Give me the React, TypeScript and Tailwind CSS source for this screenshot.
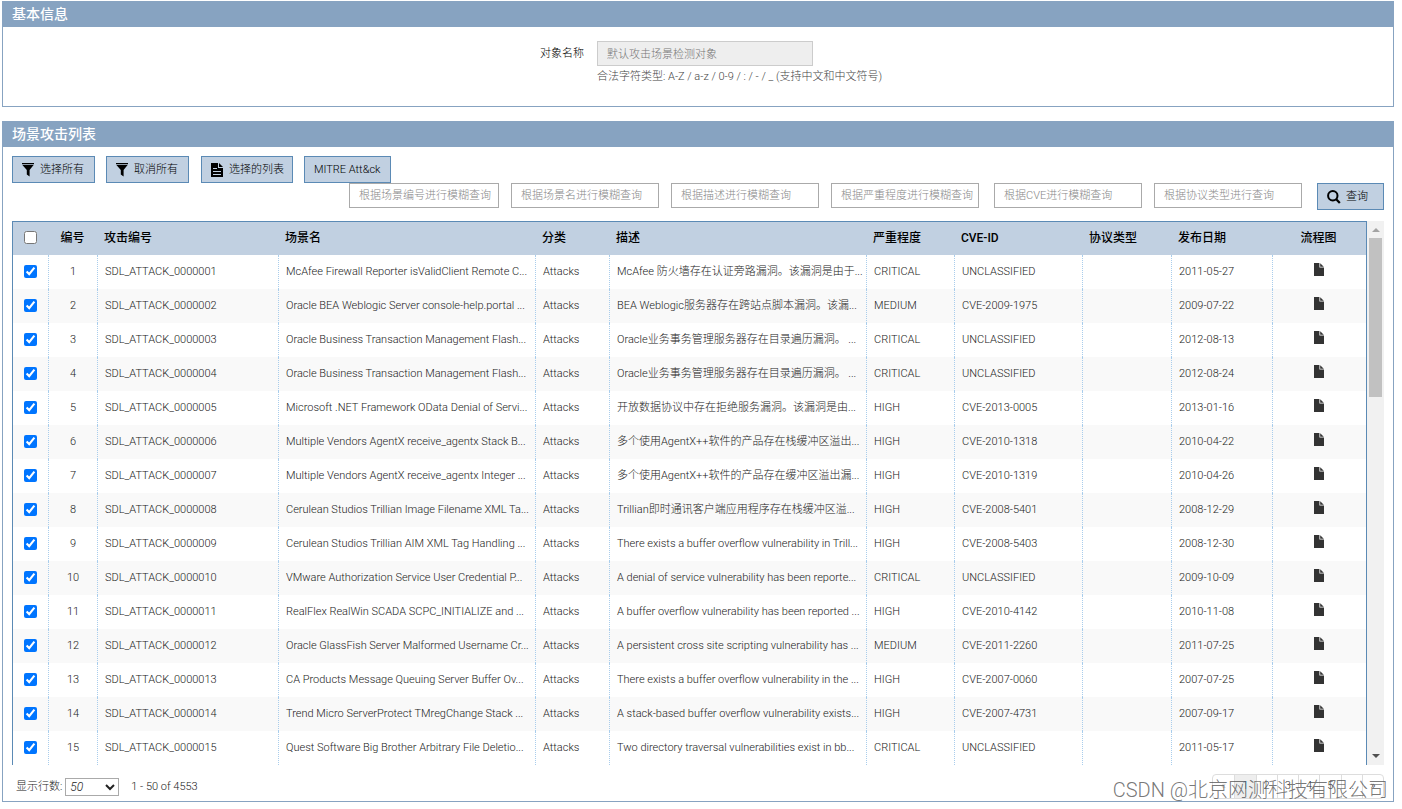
import React from "react";

type Row = { name: string; desc: string; level: string; cve: string; date: string };

const U = "UNCLASSIFIED";
const rows: Row[] = [
  { name: "McAfee Firewall Reporter isValidClient Remote C...", desc: "McAfee 防火墙存在认证旁路漏洞。该漏洞是由于...", level: "CRITICAL", cve: U, date: "2011-05-27" },
  { name: "Oracle BEA Weblogic Server console-help.portal ...", desc: "BEA Weblogic服务器存在跨站点脚本漏洞。该漏...", level: "MEDIUM", cve: "CVE-2009-1975", date: "2009-07-22" },
  { name: "Oracle Business Transaction Management Flash...", desc: "Oracle业务事务管理服务器存在目录遍历漏洞。 ...", level: "CRITICAL", cve: U, date: "2012-08-13" },
  { name: "Oracle Business Transaction Management Flash...", desc: "Oracle业务事务管理服务器存在目录遍历漏洞。 ...", level: "CRITICAL", cve: U, date: "2012-08-24" },
  { name: "Microsoft .NET Framework OData Denial of Servi...", desc: "开放数据协议中存在拒绝服务漏洞。该漏洞是由...", level: "HIGH", cve: "CVE-2013-0005", date: "2013-01-16" },
  { name: "Multiple Vendors AgentX receive_agentx Stack B...", desc: "多个使用AgentX++软件的产品存在栈缓冲区溢出...", level: "HIGH", cve: "CVE-2010-1318", date: "2010-04-22" },
  { name: "Multiple Vendors AgentX receive_agentx Integer ...", desc: "多个使用AgentX++软件的产品存在缓冲区溢出漏...", level: "HIGH", cve: "CVE-2010-1319", date: "2010-04-26" },
  { name: "Cerulean Studios Trillian Image Filename XML Ta...", desc: "Trillian即时通讯客户端应用程序存在栈缓冲区溢...", level: "HIGH", cve: "CVE-2008-5401", date: "2008-12-29" },
  { name: "Cerulean Studios Trillian AIM XML Tag Handling ...", desc: "There exists a buffer overflow vulnerability in Trill...", level: "HIGH", cve: "CVE-2008-5403", date: "2008-12-30" },
  { name: "VMware Authorization Service User Credential P...", desc: "A denial of service vulnerability has been reporte...", level: "CRITICAL", cve: U, date: "2009-10-09" },
  { name: "RealFlex RealWin SCADA SCPC_INITIALIZE and ...", desc: "A buffer overflow vulnerability has been reported ...", level: "HIGH", cve: "CVE-2010-4142", date: "2010-11-08" },
  { name: "Oracle GlassFish Server Malformed Username Cr...", desc: "A persistent cross site scripting vulnerability has ...", level: "MEDIUM", cve: "CVE-2011-2260", date: "2011-07-25" },
  { name: "CA Products Message Queuing Server Buffer Ov...", desc: "There exists a buffer overflow vulnerability in the ...", level: "HIGH", cve: "CVE-2007-0060", date: "2007-07-25" },
  { name: "Trend Micro ServerProtect TMregChange Stack ...", desc: "A stack-based buffer overflow vulnerability exists...", level: "HIGH", cve: "CVE-2007-4731", date: "2007-09-17" },
  { name: "Quest Software Big Brother Arbitrary File Deletio...", desc: "Two directory traversal vulnerabilities exist in bb...", level: "CRITICAL", cve: U, date: "2011-05-17" },
];

const filters = [
  { label: "根据场景编号进行模糊查询", cls: "w-[150px]" },
  { label: "根据场景名进行模糊查询", cls: "ml-3 w-[148px]" },
  { label: "根据描述进行模糊查询", cls: "ml-3 w-[148px]" },
  { label: "根据严重程度进行模糊查询", cls: "ml-3 w-[148px]" },
  { label: "根据CVE进行模糊查询", cls: "ml-[15px] w-[148px]" },
  { label: "根据协议类型进行查询", cls: "ml-3 w-[148px]" },
];

const Filter = () => (
  <svg viewBox="0 0 12 14" className="mr-[6px] h-[14px] w-3 shrink-0" fill="currentColor" aria-hidden="true">
    <path d="M0 0h12v1.2H0zM0.4 2h11.2L7.6 7v6.6L4.8 11.6V7z" />
  </svg>
);

const FileText = () => (
  <svg viewBox="0 0 12 14" className="mr-[6px] h-[14px] w-3 shrink-0" fill="currentColor" aria-hidden="true">
    <path fillRule="evenodd" d="M0 0h7v5h5v9H0zM2 5v1h4V5zM2 8v1h8V8zM2 11v1h8v-1z" />
    <path d="M8 0l4 4H8z" />
  </svg>
);

const FileIcon = () => (
  <svg viewBox="0 0 10 13" className="h-[13px] w-[10px]" fill="#333" aria-hidden="true">
    <path d="M0 0h5.4v4.6H10V13H0z" />
    <path d="M6.2 0.2L9.8 3.8H6.2z" />
  </svg>
);

const SearchIcon = () => (
  <svg viewBox="0 0 14 14" className="mr-[5px] h-[14px] w-[14px] shrink-0" fill="none" stroke="currentColor" aria-hidden="true">
    <circle cx="5.8" cy="5.8" r="4.7" strokeWidth="2" />
    <path d="M9 9l3.8 4" strokeWidth="2.2" />
  </svg>
);

function Button({ className = "", children }: { className?: string; children: React.ReactNode }) {
  return (
    <button type="button" className={`flex h-[27px] items-center border border-[#5b8ab5] bg-[#c1d0e1] px-[9px] pt-px text-[11px] text-black ${className}`}>
      {children}
    </button>
  );
}

function Panel({ title, className = "", children }: { title: string; className?: string; children: React.ReactNode }) {
  return (
    <section className={`border border-[#87a3c1] bg-white ${className}`}>
      <h2 className="-mx-px -mt-px h-[26px] bg-[#87a3c1] pl-[10px] text-[14px] leading-[26px] font-medium text-white">{title}</h2>
      {children}
    </section>
  );
}

const th = "h-[33px] pb-[2px] pl-[6px] text-left text-[12px] font-medium text-black whitespace-nowrap";
const thCenter = "h-[33px] pr-[2px] pb-[2px] text-center text-[12px] font-medium text-black";
const td = "h-[34px] border-r border-dotted border-[#a9cdec] pl-[7px] whitespace-nowrap overflow-hidden";
const page = "flex items-center justify-center border-l border-[#ddd]";

export default function App() {
  return (
    <main className="pt-px pr-2 pl-[2px] font-[Roboto,'Noto_Sans_CJK_SC',sans-serif] text-[11px] font-light text-[#222]">
      <Panel title="基本信息" className="h-[106px]">
        <div className="flex pt-[14px]">
          <label htmlFor="objname" className="w-[41.8%] text-right leading-[25px] text-black">对象名称</label>
          <div className="ml-[13px]">
            <input id="objname" disabled value="默认攻击场景检测对象" className="block h-[25px] w-[216px] border border-[#ccc] bg-[#eee] px-[9px] pb-[2px] text-[#777]" />
            <p className="leading-[21px] text-[#444]">合法字符类型: A-Z / a-z / 0-9 / : / - / _ (支持中文和中文符号)</p>
          </div>
        </div>
      </Panel>

      <Panel title="场景攻击列表" className="relative mt-[14px]">
        <div className="pt-[9px] pr-[9px] pl-[9px]">
          <div className="flex">
            <Button className="w-[83px]"><Filter />选择所有</Button>
            <Button className="ml-[11px] w-[83px]"><Filter />取消所有</Button>
            <Button className="ml-3 w-[92px]"><FileText /><span className="whitespace-nowrap">选择的列表</span></Button>
            <Button className="ml-[11px]">MITRE Att&amp;ck</Button>
          </div>
          <div className="flex justify-end">
            {filters.map((f) => (
              <input key={f.label} aria-label={f.label} placeholder={f.label} className={`h-[25px] border border-[#aaa] pr-1 pl-[9px] placeholder:text-[#888] ${f.cls}`} />
            ))}
            <Button className="ml-[15px] w-[67px]"><SearchIcon />查询</Button>
          </div>

          <div className="mt-[11px] flex">
            <div className="min-w-0 flex-1 border-x border-t border-[#5b8ab5]">
              <table className="w-full table-fixed border-separate border-spacing-0">
                <colgroup>
                  <col className="w-[36px]" /><col className="w-[49px]" /><col className="w-[181px]" /><col className="w-[257px]" />
                  <col className="w-[74px]" /><col className="w-[257px]" /><col className="w-[88px]" /><col className="w-[128px]" />
                  <col className="w-[89px]" /><col className="w-[101px]" /><col className="w-[93px]" />
                </colgroup>
                <thead>
                  <tr className="bg-[#c1d0e1]">
                    <th className={thCenter}><input type="checkbox" aria-label="全选" className="mx-auto block h-[13px] w-[13px]" /></th>
                    <th className={thCenter}>编号</th>
                    <th className={th}>攻击编号</th>
                    <th className={th}>场景名</th>
                    <th className={th}>分类</th>
                    <th className={th}>描述</th>
                    <th className={th}>严重程度</th>
                    <th className={th}>CVE-ID</th>
                    <th className={th}>协议类型</th>
                    <th className={th}>发布日期</th>
                    <th className={thCenter}>流程图</th>
                  </tr>
                </thead>
                <tbody>
                  {rows.map((r, i) => (
                    <tr key={i} className="even:bg-[#f9f9f9]">
                      <td className="h-[34px] border-r border-dotted border-[#a9cdec] pb-[2px]">
                        <input type="checkbox" defaultChecked aria-label={`选择 ${i + 1}`} className="mx-auto block h-[13px] w-[13px]" />
                      </td>
                      <td className="h-[34px] border-r border-dotted border-[#a9cdec] text-center">{i + 1}</td>
                      <td className={td}>SDL_ATTACK_{String(i + 1).padStart(7, "0")}</td>
                      <td className={td}>{r.name}</td>
                      <td className={td}>Attacks</td>
                      <td className={td}>{r.desc}</td>
                      <td className={td}>{r.level}</td>
                      <td className={td}>{r.cve}</td>
                      <td className={td}></td>
                      <td className={td}>{r.date}</td>
                      <td className="h-[34px] pr-[2px] pb-[5px]">
                        <div className="flex justify-center"><FileIcon /></div>
                      </td>
                    </tr>
                  ))}
                </tbody>
              </table>
            </div>
            <div className="flex w-[17px] flex-col items-center bg-[#f1f1f1]">
              <svg viewBox="0 0 17 17" className="h-[17px] w-[17px]" aria-hidden="true"><path d="M5 11h8L9 7z" fill="#a3a3a3" /></svg>
              <div className="h-[159px] w-[13px] bg-[#c1c1c1]" />
              <svg viewBox="0 0 17 17" className="mt-auto h-[17px] w-[17px]" aria-hidden="true"><path d="M5 6h8l-4 4z" fill="#505050" /></svg>
            </div>
          </div>
        </div>

        <div className="flex h-9 items-start pt-[9px] pr-[9px] pl-[13px]">
          <label htmlFor="rowcount" className="leading-[26px]">显示行数:</label>
          <select id="rowcount" className="mt-[4px] ml-[3px] h-[18px] w-[54px] border border-[#aaa] bg-white text-[12px] italic">
            <option>50</option>
          </select>
          <span className="ml-3 leading-[26px]">1 - 50 of 4553</span>
          <nav aria-label="分页" className="ml-auto grid h-[25px] w-[172px] grid-cols-8 overflow-hidden rounded-[4px] border border-[#ddd] text-[11px] text-[#333]">
            <a href="#prev" className="flex items-center justify-center text-[#aaa]">«</a>
            <a href="#1" className={`${page} bg-[#eee] text-[#337ab7]`}>1</a>
            <a href="#2" className={page}>2</a>
            <a href="#3" className={page}>3</a>
            <a href="#4" className={page}>4</a>
            <a href="#5" className={page}>5</a>
            <a href="#more" className={page}>..</a>
            <a href="#next" className={page}>»</a>
          </nav>
        </div>
        <span className="pointer-events-none absolute right-[5px] -bottom-px text-[20px] leading-6 whitespace-nowrap text-[#555]/80">CSDN @北京网测科技有限公司</span>
      </Panel>
    </main>
  );
}
